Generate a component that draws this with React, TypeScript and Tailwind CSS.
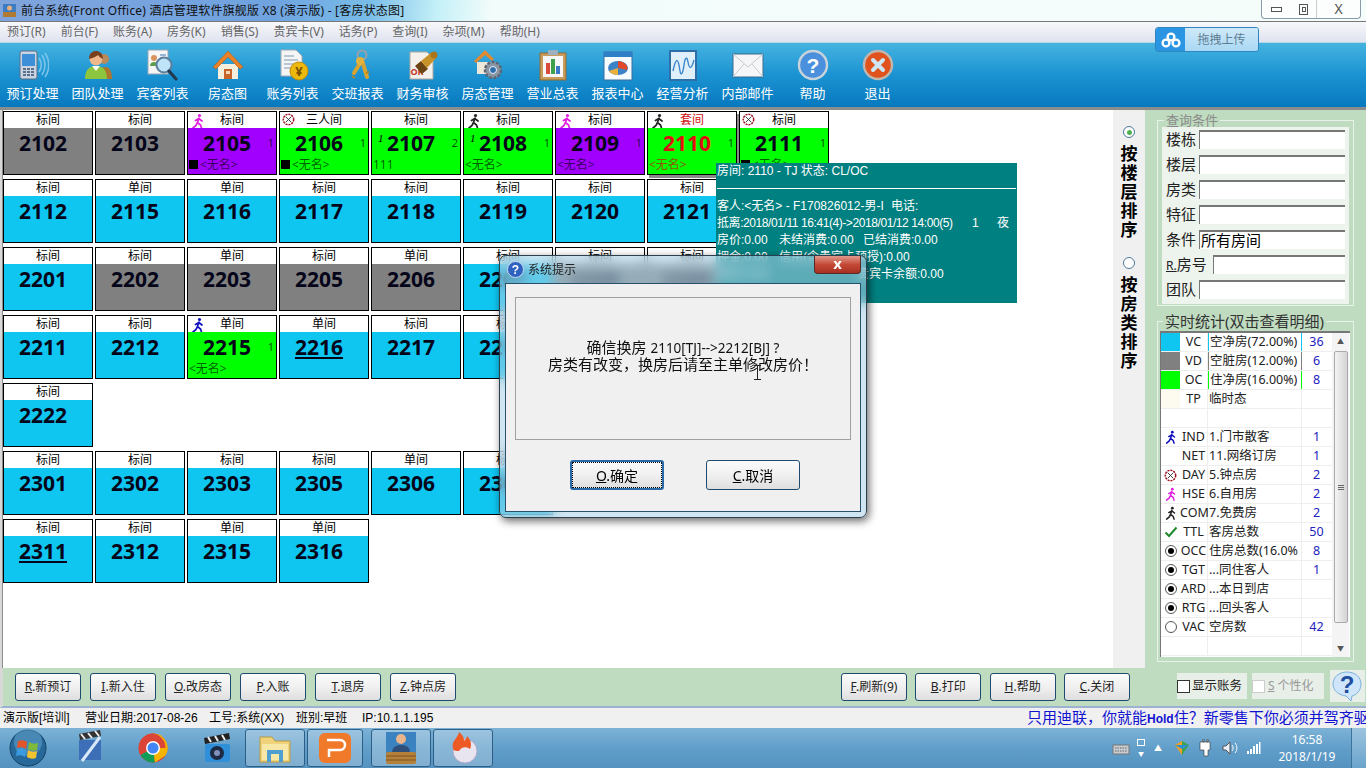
import type { ReactNode } from "react";

type Room = {
  no: string;
  type: string;
  color: string;
  icon?: ReactNode;
  count?: string;
  name?: string;
  square?: boolean;
  mark?: boolean;
  under?: boolean;
  red?: boolean;
  selected?: boolean;
};

const CYAN = "bg-[#0ec6f0]";
const GRAY = "bg-[#808080]";
const PURPLE = "bg-[#a100ff]";
const GREEN = "bg-[#00ff00]";

function Walker({ color, size = 16 }: { color: string; size?: number }) {
  return (
    <svg width={size} height={size} viewBox="0 0 16 16" fill="none" stroke={color} strokeWidth="1.7" strokeLinecap="round">
      <circle cx="9.5" cy="2.5" r="1.6" fill={color} stroke="none" />
      <path d="M9 5 7.5 9.5 10.5 12 11.5 15M7.5 9.5 6 12.5 3 15M8.8 5.5 12 8M8.8 5.5 5.5 7.5" />
    </svg>
  );
}

function DayIcon({ size = 13 }: { size?: number }) {
  return (
    <svg width={size} height={size} viewBox="0 0 14 14" fill="none">
      <circle cx="7" cy="7" r="5.6" stroke="#a01020" strokeWidth="1.6" strokeDasharray="2.2 1" />
      <path d="M4 4 10 10M10 4 4 10" stroke="#333" strokeWidth="1" />
    </svg>
  );
}

const rooms: Room[][] = [
  [
    { no: "2102", type: "标间", color: GRAY },
    { no: "2103", type: "标间", color: GRAY },
    { no: "2105", type: "标间", color: PURPLE, icon: <Walker color="#e020e0" />, count: "1", name: "<无名>", square: true },
    { no: "2106", type: "三人间", color: GREEN, icon: <DayIcon />, count: "1", name: "<无名>", square: true },
    { no: "2107", type: "标间", color: GREEN, count: "2", name: "111", mark: true },
    { no: "2108", type: "标间", color: GREEN, icon: <Walker color="#222" />, count: "1", name: "<无名>", mark: true },
    { no: "2109", type: "标间", color: PURPLE, icon: <Walker color="#e020e0" />, count: "1", name: "<无名>" },
    { no: "2110", type: "套间", color: GREEN, icon: <Walker color="#222" />, count: "1", name: "<无名>", red: true, selected: true },
    { no: "2111", type: "标间", color: GREEN, icon: <DayIcon />, count: "1", name: "<无名>", square: true },
  ],
  [
    { no: "2112", type: "标间", color: CYAN },
    { no: "2115", type: "单间", color: CYAN },
    { no: "2116", type: "单间", color: CYAN },
    { no: "2117", type: "标间", color: CYAN },
    { no: "2118", type: "标间", color: CYAN },
    { no: "2119", type: "标间", color: CYAN },
    { no: "2120", type: "标间", color: CYAN },
    { no: "2121", type: "标间", color: CYAN },
  ],
  [
    { no: "2201", type: "标间", color: CYAN },
    { no: "2202", type: "标间", color: GRAY },
    { no: "2203", type: "单间", color: GRAY },
    { no: "2205", type: "标间", color: GRAY },
    { no: "2206", type: "单间", color: GRAY },
    { no: "2207", type: "标间", color: CYAN },
    { no: "2208", type: "标间", color: GRAY },
    { no: "2209", type: "标间", color: GRAY },
  ],
  [
    { no: "2211", type: "标间", color: CYAN },
    { no: "2212", type: "标间", color: CYAN },
    { no: "2215", type: "单间", color: GREEN, icon: <Walker color="#1010c0" />, count: "1", name: "<无名>" },
    { no: "2216", type: "单间", color: CYAN, under: true },
    { no: "2217", type: "标间", color: CYAN },
    { no: "2218", type: "标间", color: CYAN },
  ],
  [{ no: "2222", type: "标间", color: CYAN }],
  [
    { no: "2301", type: "标间", color: CYAN },
    { no: "2302", type: "标间", color: CYAN },
    { no: "2303", type: "标间", color: CYAN },
    { no: "2305", type: "标间", color: CYAN },
    { no: "2306", type: "单间", color: CYAN },
    { no: "2307", type: "标间", color: CYAN },
  ],
  [
    { no: "2311", type: "标间", color: CYAN, under: true },
    { no: "2312", type: "标间", color: CYAN },
    { no: "2315", type: "单间", color: CYAN },
    { no: "2316", type: "单间", color: CYAN },
  ],
];

function RoomCell({ room }: { room: Room }) {
  return (
    <div className={`relative w-[90px] h-[64px] border border-black flex flex-col ${room.selected ? "shadow-[2px_3px_0_#8a8a8a]" : ""}`}>
      <div className={`h-[16px] bg-white text-center text-[12px] leading-[16px] ${room.red ? "text-[#d01010]" : "text-black"}`}>{room.type}</div>
      {room.icon && <div className="absolute left-[2px] top-[1px]">{room.icon}</div>}
      <div className={`flex-1 relative ${room.color}`}>
        <div className={`h-[28px] pt-[2px] pr-[10px] text-center text-[21px] leading-[26px] font-bold font-['Noto_Sans',sans-serif] ${room.red ? "text-[#e01010]" : "text-[#05051a]"} ${room.under ? "underline" : ""}`}>
          {room.no}
        </div>
        {room.mark && <span className="absolute left-[6px] top-[2px] text-[11px] italic font-['Liberation_Serif',serif] text-black">1</span>}
        {room.count && <span className="absolute right-[2px] top-[9px] text-[11px] leading-[12px] text-black/70">{room.count}</span>}
        {room.name && (
          <div className={`flex items-center h-[17px] pl-[1px] text-[12px] leading-[17px] ${room.red ? "text-[#8a5a00]" : "text-black/65"}`}>
            {room.square && <span className="w-[9px] h-[9px] bg-black mr-[2px]" />}
            {room.name}
          </div>
        )}
      </div>
    </div>
  );
}

const IconFrame = ({ children }: { children: ReactNode }) => (
  <svg width="32" height="32" viewBox="0 0 32 32" fill="none">
    {children}
  </svg>
);

const toolIcons: Record<string, ReactNode> = {
  phone: (
    <IconFrame>
      <rect x="3" y="2" width="17" height="28" rx="2" fill="#c9d4e2" stroke="#5a6f88" />
      <rect x="5" y="5" width="13" height="12" fill="#3d8fd8" />
      <path d="M6 20h3M10 20h3M14 20h3M6 23h3M10 23h3M14 23h3M6 26h3M10 26h3M14 26h3" stroke="#39506c" strokeWidth="1.6" />
      <path d="M22 9c3 4 3 10 0 14M25 6c4 6 4 14 0 20M28 4c5 7 5 17 0 24" stroke="#7dc4ea" strokeWidth="1.6" />
    </IconFrame>
  ),
  group: (
    <IconFrame>
      <circle cx="22" cy="10" r="5" fill="#b98a5a" />
      <path d="M16 30c0-9 3-12 7-12s7 3 7 12z" fill="#a9772d" />
      <circle cx="14" cy="10" r="6.5" fill="#f0b98c" />
      <path d="M7 10c0-6 4-8 7-8s7 2 7 8c-3-1-4-3-5-4-2 2-6 3-9 4z" fill="#7a3f1c" />
      <path d="M3 30c0-9 4-13 11-13s11 4 11 13z" fill="#8cc63f" />
      <path d="M10 17l4 5 4-5z" fill="#fff" />
    </IconFrame>
  ),
  search: (
    <IconFrame>
      <rect x="1" y="1" width="20" height="24" fill="#f6f6f6" stroke="#9aa6b4" />
      <circle cx="7" cy="9" r="3" fill="#d6935c" />
      <path d="M3 17c0-3 2-4 4-4s4 1 4 4z" fill="#5aa04a" />
      <path d="M13 6h6M13 9h6" stroke="#3a78b8" />
      <circle cx="17" cy="16" r="7.5" fill="#bfe3f7" stroke="#5e7f9c" strokeWidth="2" />
      <path d="M22 22l7 8" stroke="#22384e" strokeWidth="3" strokeLinecap="round" />
    </IconFrame>
  ),
  house: (
    <IconFrame>
      <path d="M6 15h20v15H6z" fill="#f5eedd" />
      <path d="M1 18 16 2l15 16-3 2L16 8 4 20z" fill="#e8822a" stroke="#b05a14" strokeWidth=".6" />
      <path d="M12 20h8v10h-8z" fill="#c8642a" />
      <path d="M14 22h4v3h-4z" fill="#f3d9b8" />
    </IconFrame>
  ),
  bill: (
    <IconFrame>
      <path d="M4 1h15l6 6v20H4z" fill="#f5f5f5" stroke="#a4acb6" />
      <path d="M7 7h10M7 11h14M7 15h10M7 19h8" stroke="#7d97b5" />
      <circle cx="22" cy="22" r="9" fill="#eeb90f" stroke="#c08d08" />
      <text x="22" y="27" textAnchor="middle" fontSize="13" fontWeight="700" fill="#7a5200">¥</text>
    </IconFrame>
  ),
  keys: (
    <IconFrame>
      <circle cx="20" cy="6" r="4.5" stroke="#9aa0a8" strokeWidth="2" />
      <path d="M20 11 12 24M20 11l5 17" stroke="#d8a431" strokeWidth="4" strokeLinecap="round" />
      <circle cx="18" cy="12" r="4" fill="#e2b23f" />
      <path d="M10 27l3 2M24 24l3-1" stroke="#b8861f" strokeWidth="2" />
    </IconFrame>
  ),
  stamp: (
    <IconFrame>
      <path d="M3 3h17l6 6v21H3z" fill="#f4f0ec" stroke="#b0a8a0" />
      <text x="10" y="26" textAnchor="middle" fontSize="9" fontWeight="700" fill="#c0392b">OK</text>
      <path d="M8 17l7 8 6-5-7-8z" fill="#6b4413" />
      <path d="M14 12 25 3l5 5-10 11z" fill="#c8922a" />
      <circle cx="27" cy="6" r="3.5" fill="#a9741a" />
    </IconFrame>
  ),
  roomgear: (
    <IconFrame>
      <path d="M2 12 13 1l9 9-2 2-7-6-9 8z" fill="#e08a30" />
      <path d="M5 13h14v12H5z" fill="#efe7d8" />
      <circle cx="21" cy="21" r="8" fill="#8d97a3" stroke="#5c6773" strokeWidth="2.5" strokeDasharray="3 1.5" />
      <circle cx="21" cy="21" r="3.5" fill="#2d6fa8" stroke="#eef" />
    </IconFrame>
  ),
  board: (
    <IconFrame>
      <rect x="3" y="4" width="26" height="27" fill="#c99c5b" stroke="#8f6a33" />
      <rect x="6" y="7" width="20" height="21" fill="#f7f7f7" />
      <rect x="11" y="1" width="10" height="5" fill="#9eb0c0" />
      <path d="M9 14h4v11H9z" fill="#d84a3a" />
      <path d="M14 10h4v15h-4z" fill="#3da04a" />
      <path d="M19 17h4v8h-4z" fill="#3a78c8" />
    </IconFrame>
  ),
  pie: (
    <IconFrame>
      <rect x="2" y="3" width="28" height="28" fill="#f6fbff" stroke="#3a6ea0" />
      <rect x="2" y="3" width="28" height="5" fill="#2f7fc8" />
      <ellipse cx="16" cy="19" rx="10" ry="7" fill="#3b83c8" />
      <path d="M16 19V12a10 7 0 0 1 9 9z" fill="#e04a2a" />
      <path d="M16 19l-9 3a10 7 0 0 0 9 4z" fill="#e8b03a" />
    </IconFrame>
  ),
  chart: (
    <IconFrame>
      <rect x="3" y="2" width="26" height="29" fill="#dff0fb" stroke="#2f6fa8" strokeWidth="2" />
      <path d="M6 22c3-14 5-14 7 0 1 6 3 2 4-6s3-9 4-3 3 9 6-2" stroke="#3a86c8" strokeWidth="1.4" />
    </IconFrame>
  ),
  mail: (
    <IconFrame>
      <rect x="1" y="5" width="30" height="23" fill="#f4f6f8" stroke="#3f6a8c" />
      <path d="M1 5l15 13L31 5M1 28l11-13M31 28 20 15" stroke="#c6ccd2" />
    </IconFrame>
  ),
  help: (
    <IconFrame>
      <circle cx="16" cy="16" r="14" fill="#4a90dc" stroke="#c9d3dc" strokeWidth="2.4" />
      <text x="16" y="24" textAnchor="middle" fontSize="21" fontWeight="700" fill="#fff" fontFamily="Liberation Sans">?</text>
    </IconFrame>
  ),
  exit: (
    <IconFrame>
      <circle cx="16" cy="16" r="14" fill="#e0531c" stroke="#bfb6ae" strokeWidth="2.4" />
      <path d="M11 11l10 10M21 11 11 21" stroke="#cfe6f4" strokeWidth="4" strokeLinecap="round" />
    </IconFrame>
  ),
};

const tools = [
  ["预订处理", "phone"],
  ["团队处理", "group"],
  ["宾客列表", "search"],
  ["房态图", "house"],
  ["账务列表", "bill"],
  ["交班报表", "keys"],
  ["财务审核", "stamp"],
  ["房态管理", "roomgear"],
  ["营业总表", "board"],
  ["报表中心", "pie"],
  ["经营分析", "chart"],
  ["内部邮件", "mail"],
  ["帮助", "help"],
  ["退出", "exit"],
];

const menus = ["预订(R)", "前台(F)", "账务(A)", "房务(K)", "销售(S)", "贵宾卡(V)", "话务(P)", "查询(I)", "杂项(M)", "帮助(H)"];

function Btn({ k, label, className }: { k: string; label: string; className?: string }) {
  return (
    <button className={`h-[28px] w-[66px] rounded-[3px] border border-[#1d4a6e] bg-[linear-gradient(180deg,#fbfbfb,#f0f0f0_50%,#dedede)] text-[12px] text-[#222] ${className ?? ""}`}>
      <span className="underline">{k}</span>.{label}
    </button>
  );
}

const queryFields = [
  { label: "楼栋" },
  { label: "楼层" },
  { label: "房类" },
  { label: "特征" },
  { label: "条件", value: "所有房间" },
  { label: "房号", hot: true },
  { label: "团队" },
];

function Radio({ on }: { on: boolean }) {
  return (
    <span className="flex w-[12px] h-[12px] rounded-full border border-[#555] bg-white items-center justify-center">
      {on && <span className="w-[6px] h-[6px] rounded-full bg-black" />}
    </span>
  );
}

type Stat = { icon?: ReactNode; code: string; desc: string; val?: string; edge?: string };

const Swatch = ({ c }: { c: string }) => <span className={`block w-[19px] h-[18px] ${c}`} />;

const stats: Stat[] = [
  { icon: <Swatch c={CYAN} />, code: "VC", desc: "空净房(72.00%)", val: "36", edge: "border-[#0ec6f0]" },
  { icon: <Swatch c={GRAY} />, code: "VD", desc: "空脏房(12.00%)", val: "6", edge: "border-[#808080]" },
  { icon: <Swatch c={GREEN} />, code: "OC", desc: "住净房(16.00%)", val: "8", edge: "border-[#00ff00]" },
  { icon: <Swatch c="bg-[#fdfbf0]" />, code: "TP", desc: "临时态" },
  { code: "", desc: "" },
  { icon: <Walker color="#1010c0" size={14} />, code: "IND", desc: "1.门市散客", val: "1" },
  { code: "NET", desc: "11.网络订房", val: "1" },
  { icon: <DayIcon />, code: "DAY", desc: "5.钟点房", val: "2" },
  { icon: <Walker color="#e020e0" size={14} />, code: "HSE", desc: "6.自用房", val: "2" },
  { icon: <Walker color="#222" size={14} />, code: "COM", desc: "7.免费房", val: "2" },
  {
    icon: (
      <svg width="14" height="14" viewBox="0 0 14 14" fill="none">
        <path d="M1.5 7.5 5 11l7.5-8.5" stroke="#1f8a2e" strokeWidth="2" />
      </svg>
    ),
    code: "TTL",
    desc: "客房总数",
    val: "50",
  },
  { icon: <Radio on />, code: "OCC", desc: "住房总数(16.0%", val: "8" },
  { icon: <Radio on />, code: "TGT", desc: "...同住客人", val: "1" },
  { icon: <Radio on />, code: "ARD", desc: "...本日到店" },
  { icon: <Radio on />, code: "RTG", desc: "...回头客人" },
  { icon: <Radio on={false} />, code: "VAC", desc: "空房数", val: "42" },
  { code: "", desc: "" },
];

function TaskButton({ children }: { children: ReactNode }) {
  return (
    <div className="w-[60px] h-[38px] rounded-[3px] border border-[#2d5f86] bg-white/25 flex items-center justify-center">
      {children}
    </div>
  );
}

export default function App() {
  return (
    <div className="relative w-[1366px] h-[768px] overflow-hidden flex flex-col bg-[#f0f0f0] font-['Noto_Sans','Noto_Sans_CJK_SC',sans-serif] text-black">
      {/* title bar */}
      <div className="relative h-[22px] flex items-center border-b border-[#777] bg-[linear-gradient(96deg,#7fa4dc_0%,#6fa3e0_20%,#78bce8_27%,#c4f0f8_32%,#f2fcfa_36%,#f5fdfb_100%)]">
        <svg className="ml-[2px] mr-[4px]" width="15" height="15" viewBox="0 0 15 15">
          <rect x="1" y="1" width="13" height="13" fill="#3d7cc0" />
          <circle cx="7.5" cy="5" r="2.5" fill="#e8b080" />
          <rect x="1" y="9" width="13" height="5" fill="#b07a30" />
        </svg>
        <span className="text-[12px] tracking-[0.2px] text-[#111] whitespace-nowrap">前台系统(Front Office) 酒店管理软件旗舰版 X8 (演示版) - [客房状态图]</span>
        <div className="absolute right-[5px] top-0 w-[100px] h-[19px] flex border border-t-0 border-[#8a9aa6] rounded-b-[4px] bg-white/60">
          <div className="w-[29px] flex items-center justify-center">
            <span className="w-[11px] h-[5px] border border-[#555]" />
          </div>
          <div className="w-[26px] flex items-center justify-center border-r border-[#ccc]">
            <span className="w-[9px] h-[11px] border border-[#555] flex items-center justify-center">
              <span className="w-[4px] h-[5px] border border-[#555]" />
            </span>
          </div>
          <div className="flex-1 text-center text-[14px] leading-[18px] text-[#555]">X</div>
        </div>
      </div>

      {/* menu */}
      <div className="h-[20px] flex items-center gap-[15px] pl-[7px] bg-[linear-gradient(180deg,#f7f8fb,#dfe3ef)] text-[12px] text-[#666]">
        {menus.map((m) => (
          <span key={m}>{m}</span>
        ))}
      </div>

      {/* toolbar */}
      <div className="h-[65px] flex border-t border-[#b8d6e4] bg-[linear-gradient(180deg,#45b3e0,#1b93d2_50%,#0779bf)]">
        {tools.map(([label, key]) => (
          <div key={label} className="w-[65px] flex flex-col items-center pt-[6px]">
            {toolIcons[key]}
            <span className="mt-[3px] text-[13px] leading-[18px] text-white whitespace-nowrap">{label}</span>
          </div>
        ))}
      </div>
      <div className="h-[3px] bg-[#8c8c8c]" />

      {/* upload button */}
      <div className="absolute left-[1155px] top-[27px] w-[104px] h-[25px] flex rounded-[3px] border border-[#2f86c0] overflow-hidden z-10">
        <div className="w-[29px] bg-[#2a95e2] flex items-center justify-center">
          <svg width="20" height="16" viewBox="0 0 20 16" fill="none" stroke="#fff" strokeWidth="2.4">
            <circle cx="10" cy="5" r="3.4" />
            <circle cx="5" cy="11" r="3.4" />
            <circle cx="15" cy="11" r="3.4" />
          </svg>
        </div>
        <div className="flex-1 bg-[linear-gradient(180deg,#cfe9f8,#a9d8f4)] text-center text-[12px] leading-[23px] text-[#5d7d92]">拖拽上传</div>
      </div>

      {/* main */}
      <div className="h-[558px] flex">
        <div className="w-[3px] bg-[#d8d8d8] border-r border-[#8c8c8c]" />
        <div className="w-[1110px] bg-white pt-[1px] flex flex-col gap-[4px]">
          {rooms.map((row) => (
            <div key={row[0].no} className="flex gap-[2px]">
              {row.map((room) => (
                <RoomCell key={room.no} room={room} />
              ))}
            </div>
          ))}
        </div>

        <div className="w-[32px] bg-[#f0f0f0] flex flex-col items-center pt-[16px]">
          <span className="flex w-[12px] h-[12px] rounded-full border border-[#4a7a9a] bg-white items-center justify-center">
            <span className="w-[5px] h-[5px] rounded-full bg-[#4fb04f]" />
          </span>
          <div className="mt-[6px] w-[18px] text-center text-[17px] leading-[19px] font-bold break-all">按楼层排序</div>
          <span className="mt-[18px] w-[12px] h-[12px] rounded-full border border-[#4a7a9a] bg-white" />
          <div className="mt-[6px] w-[18px] text-center text-[17px] leading-[19px] font-bold break-all">按房类排序</div>
        </div>

        <div className="w-[221px] bg-[#c0dcc0] pt-[3px] px-[12px]">
          <fieldset className="h-[193px] border border-[#e8f2e8] px-[4px] pb-[1px]">
            <legend className="ml-[2px] px-[2px] text-[13px] leading-[14px] text-[#8a8a8a]">查询条件</legend>
            <div className="h-full bg-[#edf3ed] pt-[3px] px-[4px] flex flex-col gap-[6px]">
              {queryFields.map((f) => (
                <div key={f.label} className="h-[19px] flex items-center">
                  <span className={`text-[15px] text-[#222] whitespace-nowrap ${f.hot ? "mr-[6px]" : "mr-[3px]"}`}>
                    {f.hot && <span className="underline text-[12px]">R.</span>}
                    {f.label}
                  </span>
                  <div className="flex-1 h-[19px] bg-white border-t-2 border-l border-[#777] text-[15px] leading-[16px] pl-[1px]">{f.value}</div>
                </div>
              ))}
            </div>
          </fieldset>
          <fieldset className="mt-[6px] h-[350px] border border-[#e8f2e8] pl-[2px] pr-[3px]">
            <legend className="ml-[3px] px-[2px] text-[15px] leading-[18px] text-[#333]">实时统计(双击查看明细)</legend>
            <div className="flex h-[326px] mt-[1px] border-t-2 border-l border-[#777] bg-white">
              <div className="w-[171px]">
                {stats.map((s, i) => (
                  <div key={i} className="h-[19px] flex border-b border-[#eee] text-[12.5px] leading-[18px]">
                    <div className="w-[19px] flex items-center justify-center shrink-0">{s.icon}</div>
                    <div className="w-[28px] text-center border-r border-[#eee] text-[#222] whitespace-nowrap shrink-0">{s.code}</div>
                    <div className={`w-[94px] pl-[1px] whitespace-nowrap overflow-hidden shrink-0 text-[#222] ${s.edge ? `border-x ${s.edge}` : "border-r border-[#eee]"}`}>{s.desc}</div>
                    <div className="w-[29px] text-center text-[#2222c0]">{s.val}</div>
                  </div>
                ))}
              </div>
              <div className="w-[17px] bg-[#f4f4f4] flex flex-col items-center">
                <span className="mt-[5px] text-[7px] leading-[8px] text-[#555]">▲</span>
                <div className="mt-[5px] w-[14px] h-[272px] rounded-[2px] border border-[#aaa] bg-[linear-gradient(90deg,#f4f4f4,#d4d4d4)] flex flex-col items-center justify-center gap-[1px]">
                  <span className="w-[6px] h-px bg-[#666]" />
                  <span className="w-[6px] h-px bg-[#666]" />
                  <span className="w-[6px] h-px bg-[#666]" />
                </div>
                <span className="mt-[22px] text-[7px] leading-[8px] text-[#555]">▼</span>
              </div>
            </div>
          </fieldset>
        </div>
      </div>

      {/* bottom buttons */}
      <div className="h-[40px] flex items-start border-l-[3px] border-[#d8d8d8] bg-[#c0dcc0] pt-[5px] pl-[12px] border-b-2 border-b-[#9cb2d0]">
        <div className="flex gap-[9px]">
          <Btn k="R" label="新预订" />
          <Btn k="I" label="新入住" />
          <Btn k="O" label="改房态" />
          <Btn k="P" label="入账" />
          <Btn k="T" label="退房" />
          <Btn k="Z" label="钟点房" />
        </div>
        <div className="ml-[385px] flex gap-[8.3px]">
          <Btn k="F" label="刷新(9)" />
          <Btn k="B" label="打印" />
          <Btn k="H" label="帮助" />
          <Btn k="C" label="关闭" />
        </div>
        <div className="ml-[47px] flex h-[26px] w-[70px] items-center bg-[#e8efe8] text-[12.5px] text-[#222]">
          <span className="w-[13px] h-[13px] border border-[#333] bg-white mr-[2px]" />
          显示账务
        </div>
        <div className="ml-[5px] flex h-[26px] w-[72px] items-center bg-[#e8efe8] text-[12px] text-[#999]">
          <span className="w-[13px] h-[13px] border border-[#ccc] bg-white mr-[3px]" />
          <span className="underline mr-[3px]">S</span>个性化
        </div>
        <div className="ml-[6px] w-[35px] h-[32px] -mt-[3px] bg-[#e8efe8] flex items-center justify-center">
          <svg width="32" height="32" viewBox="0 0 32 32">
            <path d="M16 2c8 0 14 5 14 12s-5 11-9 12l-1 5-5-5C8 25 2 21 2 14S8 2 16 2z" fill="#cfe6fa" stroke="#7cb0dc" />
            <text x="16" y="23" textAnchor="middle" fontSize="24" fontWeight="700" fill="#1f4fa0" fontFamily="Liberation Sans">?</text>
          </svg>
        </div>
      </div>

      {/* status bar */}
      <div className="h-[20px] flex items-center pl-[3px] bg-[#f0f0f0] text-[12px] whitespace-nowrap overflow-hidden font-['Liberation_Sans','Noto_Sans_CJK_SC',sans-serif]">
        <span className="w-[82px]">演示版[培训]</span>
        <span className="w-[124px]">营业日期:2017-08-26</span>
        <span className="w-[87px]">工号:系统(XX)</span>
        <span className="w-[66px]">班别:早班</span>
        <span>IP:10.1.1.195</span>
        <span className="absolute left-[1027px] text-[15px] leading-[20px] text-[#1010d0]">只用迪联，你就能<b className="text-[12px]">Hold</b>住？新零售下你必须并驾齐驱</span>
      </div>

      {/* taskbar */}
      <div className="h-[40px] flex items-center bg-[linear-gradient(180deg,#7db2d6,#619fca_50%,#5592c0)] overflow-hidden">
        <svg className="ml-[9px]" width="38" height="38" viewBox="0 0 38 38">
          <circle cx="19" cy="19" r="18" fill="#27689a" stroke="#12405f" />
          <circle cx="19" cy="13" r="14" fill="#6fb0d8" opacity=".45" />
          <path d="M9 12c3-1 6-1 9 1l-1 7c-3-2-6-2-9-1z" fill="#e2552b" />
          <path d="M20 13c3 2 6 2 9 1l-1 7c-3 1-6 1-9-1z" fill="#7fba3a" />
          <path d="M8 20c3-1 6-1 9 1l-1 7c-3-2-6-2-9-1z" fill="#3b9be0" />
          <path d="M19 21c3 2 6 2 9 1l-1 7c-3 1-6 1-9-1z" fill="#f3c22f" />
        </svg>
        <svg className="ml-[29px]" width="28" height="38" viewBox="0 0 28 38">
          <path d="M3 5 24 1l1 6L4 11z" fill="#333" />
          <path d="M3 11h22v20H3z" fill="#3d6fb8" />
          <path d="M6 32 24 8" stroke="#d8e8f8" strokeWidth="3" />
          <path d="M5 5l4 5M12 4l4 5M19 2l4 5" stroke="#eee" strokeWidth="2" />
        </svg>
        <svg className="ml-[34px]" width="30" height="30" viewBox="0 0 30 30">
          <circle cx="15" cy="15" r="14.5" fill="#db4437" />
          <path d="M15 15 2.5 22A14.5 14.5 0 0 0 17 29.4z" fill="#0f9d58" />
          <path d="M15 .5a14.5 14.5 0 0 1 12.500 22L17 29.400 15 15z" fill="#f4b400" />
          <path d="M15 .5A14.5 14.5 0 0 0 2.500 22L9 15h18.500A14.500 14.500 0 0 0 15 .5z" fill="#db4437" />
          <circle cx="15" cy="15" r="7" fill="#fff" />
          <circle cx="15" cy="15" r="5.500" fill="#4285f4" />
        </svg>
        <svg className="ml-[34px]" width="30" height="32" viewBox="0 0 30 32">
          <path d="M2 6 27 1l1 6L3 12z" fill="#222" />
          <path d="M6 5l3 5M13 4l3 5M20 3l3 5" stroke="#eee" strokeWidth="2" />
          <rect x="3" y="12" width="25" height="18" rx="2" fill="#2f8fd8" />
          <circle cx="15" cy="21" r="7" fill="#1c2a44" />
          <circle cx="15" cy="21" r="3" fill="#8090b8" />
        </svg>
        <div className="ml-[13px] flex gap-[2px]">
          <TaskButton>
            <svg width="34" height="32" viewBox="0 0 34 32">
              <path d="M2 5h12l3 4h15v21H2z" fill="#efd27a" stroke="#b89a40" />
              <path d="M4 12h26v16H4z" fill="#f8e8a8" />
              <path d="M9 18h16v12h-4v-8h-8v8H9z" fill="#4f9fd0" />
            </svg>
          </TaskButton>
          <div className="w-[56px] h-[38px] rounded-[3px] border border-[#2d5f86] bg-white/25 flex items-center justify-center mr-[6px]">
            <svg width="34" height="32" viewBox="0 0 34 32">
              <rect x="1" y="1" width="32" height="30" rx="6" fill="#f0792a" />
              <path d="M9 8h13a5 5 0 0 1 0 10H11v7" fill="none" stroke="#fff" strokeWidth="2.500" />
            </svg>
          </div>
          <TaskButton>
            <svg width="36" height="34" viewBox="0 0 36 34">
              <rect x="3" y="1" width="30" height="22" fill="#3a82c0" />
              <circle cx="18" cy="8" r="5" fill="#e8b58c" />
              <path d="M9 22c0-6 4-8 9-8s9 2 9 8z" fill="#2d4f7a" />
              <rect x="3" y="21" width="30" height="12" rx="2" fill="#b5803a" />
              <path d="M3 25h30M3 29h30" stroke="#7e5420" />
            </svg>
          </TaskButton>
          <TaskButton>
            <svg width="30" height="34" viewBox="0 0 30 34">
              <circle cx="17" cy="20" r="12" fill="#e8e4f0" stroke="#b0a8c8" />
              <path d="M5 18C3 9 10 8 11 1c4 3 5 6 5 9 2-2 3-3 3-5 4 4 5 9 3 13-4-3-9-2-11 2-3 0-5 0-6-2z" fill="#ee5a24" />
            </svg>
          </TaskButton>
        </div>

        <div className="ml-auto flex items-center text-white">
          <svg width="18" height="14" viewBox="0 0 18 14">
            <rect x="1" y="4" width="16" height="9" fill="#c8ccd0" stroke="#777" />
            <path d="M3 7h12M3 10h12" stroke="#666" strokeDasharray="1.500 1" />
          </svg>
          <div className="ml-[5px] w-[12px] flex flex-col items-center">
            <span className="w-[8px] h-[7px] border border-white" />
            <span className="mt-[5px] text-[6px] leading-[6px]">▼</span>
          </div>
          <span className="ml-[7px] text-[8px] leading-[8px]">▲</span>
          <svg className="ml-[12px]" width="16" height="16" viewBox="0 0 16 16">
            <path d="M8 1 15 5l-7 10z" fill="#3fa34d" />
            <path d="M8 1 1 5l7 10z" fill="#f0a020" />
            <path d="M1 5h14L8 9z" fill="#2d8fd8" />
          </svg>
          <svg className="ml-[9px]" width="15" height="18" viewBox="0 0 15 18" fill="#fff">
            <path d="M1 3h10v8H9v6H5v-6H1zM4 0h1v3H4zM8 0h1v3H8z" stroke="#333" strokeWidth=".6" />
          </svg>
          <svg className="ml-[8px]" width="17" height="16" viewBox="0 0 17 16" fill="none" stroke="#fff">
            <path d="M1 6h3l4-4v12l-4-4H1z" fill="#e8f0f8" stroke="#555" />
            <path d="M10 5c1.500 2 1.500 4 0 6M13 3c2.500 3 2.500 7 0 10" />
          </svg>
          <svg className="ml-[7px]" width="15" height="14" viewBox="0 0 15 14" fill="#fff">
            <path d="M1 10h2v3H1zM4 8h2v5H4zM7 5h2v8H7zM10 3h2v10h-2zM13 1h1.500v12H13z" />
          </svg>
          <div className="ml-[7px] w-[78px] flex flex-col items-center text-[12px] leading-[17px]">
            <span>16:58</span>
            <span>2018/1/19</span>
          </div>
          <div className="ml-[5px] w-[15px] h-[40px] border-l border-[#3d7398] bg-[linear-gradient(180deg,#9cc4de,#6aa4cc)]" />
        </div>
      </div>

      {/* room tooltip */}
      <div className="absolute left-[716px] top-[163px] w-[301px] h-[140px] z-20 bg-[#008080] text-white text-[12px] leading-[17px] px-[1px] whitespace-nowrap overflow-hidden font-['Liberation_Sans','Noto_Sans_CJK_SC',sans-serif]">
        <div>房间: 2110 - TJ 状态: CL/OC</div>
        <div className="h-[17px] flex items-center mb-[1px]">
          <span className="w-full border-t border-white" />
        </div>
        <div className="flex">
          <span className="w-[174px]">客人:&lt;无名&gt; - F170826012-男-I</span>
          <span>电话:</span>
        </div>
        <div className="flex">
          <span className="w-[255px] tracking-[-0.42px]">抵离:2018/01/11 16:41(4)-&gt;2018/01/12 14:00(5)</span>
          <span className="w-[25px]">1</span>
          <span>夜</span>
        </div>
        <div className="flex">
          <span className="w-[62px]">房价:0.00</span>
          <span className="w-[84px]">未结消费:0.00</span>
          <span>已结消费:0.00</span>
        </div>
        <div className="flex">
          <span className="w-[62px]">押金:0.00</span>
          <span>信用(含贵宾卡预授):0.00</span>
        </div>
        <div className="flex">
          <span className="w-[140px]">积分:0.00</span>
          <span>贵宾卡余额:0.00</span>
        </div>
      </div>

      {/* confirm dialog */}
      <div className="absolute left-[499px] top-[255px] w-[368px] h-[263px] z-30 rounded-[7px] border border-[#2c3f4c] bg-[#a8cfe6]/55 backdrop-blur-[6px] shadow-[2px_3px_8px_rgba(0,0,0,0.6)] flex flex-col px-[5px] pb-[5px]">
        <div className="h-[27px] flex items-center pl-[2px]">
          <svg width="17" height="17" viewBox="0 0 17 17">
            <circle cx="8.500" cy="8.500" r="8" fill="#2f62c0" stroke="#c8d8f0" />
            <text x="8.500" y="13" textAnchor="middle" fontSize="12" fontWeight="700" fill="#fff" fontFamily="Liberation Sans">?</text>
          </svg>
          <span className="ml-[4px] text-[12px] text-[#222]">系统提示</span>
          <div className="ml-auto -mt-[9px] w-[47px] h-[18px] rounded-b-[4px] border border-[#5a2a28] border-t-0 bg-[linear-gradient(180deg,#e09a8c,#c44a36_50%,#a83022)] text-center text-[15px] font-bold leading-[15px] text-white">x</div>
        </div>
        <div className="flex-1 border border-[#27506c] bg-[#f0f0f0] pt-[13px] px-[9px]">
          <div className="h-[143px] border border-[#a0a0a0] flex flex-col items-center justify-center pb-[27px] text-[15px] leading-[16px] text-[#111]">
            <div>
              确信换房 <span className="text-[13.5px]">2110[TJ]--&gt;2212[BJ] ?</span>
            </div>
            <div>房类有改变，换房后请至主单修改房价！</div>
          </div>
          <div className="mt-[20px] pl-[4px] flex justify-center gap-[42px]">
            <button className="w-[94px] h-[30px] rounded-[3px] border-2 border-[#2a6aa8] outline-1 outline-dotted -outline-offset-3 outline-black bg-[linear-gradient(180deg,#fbfbfb,#f0f0f0_50%,#dedede)] text-[14px]">
              <span className="underline">O</span>.确定
            </button>
            <button className="w-[94px] h-[30px] rounded-[3px] border border-[#1d4a6e] bg-[linear-gradient(180deg,#fbfbfb,#f0f0f0_50%,#dedede)] text-[14px]">
              <span className="underline">C</span>.取消
            </button>
          </div>
        </div>
      </div>

      {/* text cursor */}
      <svg className="absolute left-[753px] top-[365px] z-40" width="9" height="15" viewBox="0 0 9 15" fill="none" stroke="#222">
        <path d="M1 .5h7M4.500 .5v14M1 14.500h7" />
      </svg>
    </div>
  );
}
